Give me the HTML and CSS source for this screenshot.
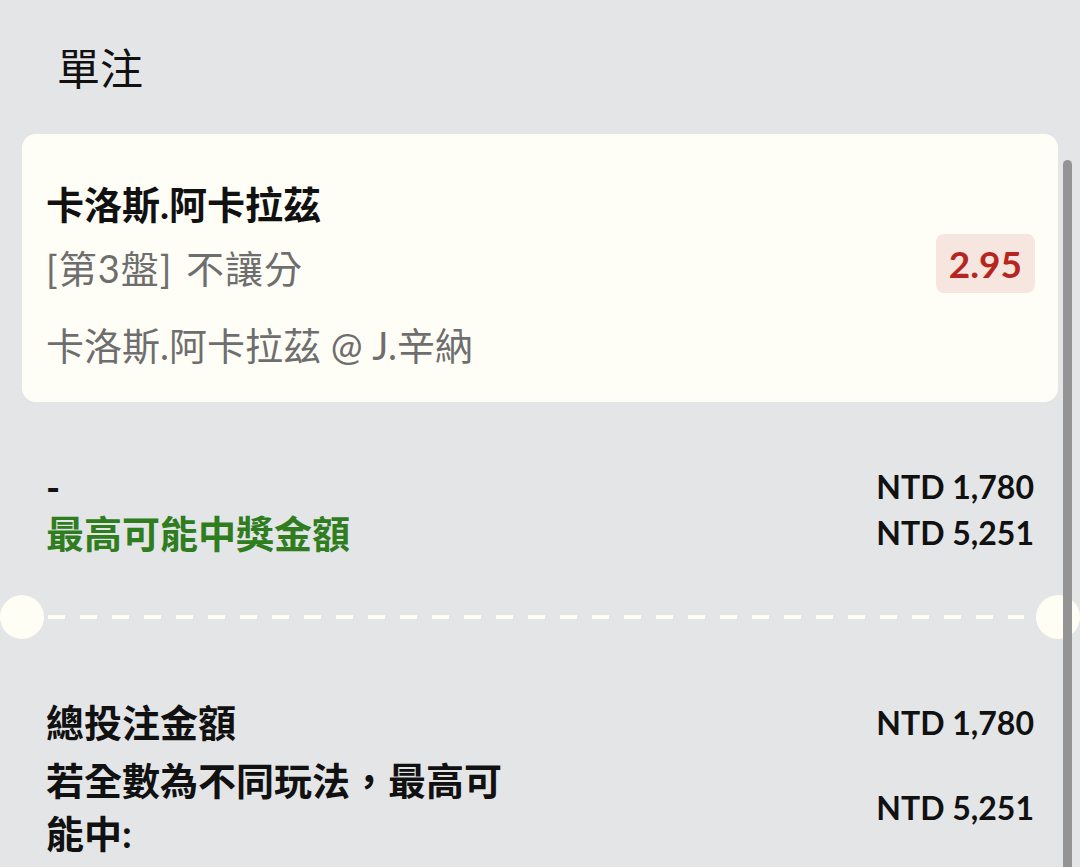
FILE: index.html
```html
<!DOCTYPE html>
<html lang="zh-Hant">
<head>
    <meta charset="UTF-8">
    <meta name="viewport" content="width=device-width, initial-scale=1.0">
    <title>單注</title>
    <link rel="stylesheet" href="styles.css">
</head>
<body>
    <div class="page">
        <h1 class="title">單注</h1>

        <div class="card">
            <div class="pick">
                <div class="pick-name">卡洛斯.阿卡拉茲</div>
                <div class="pick-market">[第3盤] 不讓分</div>
                <div class="pick-event">卡洛斯.阿卡拉茲 @ J.辛納</div>
            </div>
            <div class="odds">2.95</div>
        </div>

        <div class="summary">
            <div class="row">
                <div class="label">-</div>
                <div class="amount">NTD 1,780</div>
            </div>
            <div class="row">
                <div class="label win">最高可能中獎金額</div>
                <div class="amount">NTD 5,251</div>
            </div>
        </div>

        <div class="divider"></div>

        <div class="totals">
            <div class="row">
                <div class="label">總投注金額</div>
                <div class="amount">NTD 1,780</div>
            </div>
            <div class="row">
                <div class="label narrow">若全數為不同玩法，最高可能中:</div>
                <div class="amount">NTD 5,251</div>
            </div>
        </div>
    </div>
    <div class="scrollbar"></div>
</body>
</html>
```

FILE: styles.css
```css
body {
    margin: 0;
    background: #e4e5e7;
    font-family: Lato, "Noto Sans CJK TC", sans-serif;
    color: #111;
    overflow: hidden;
}
.page {
    padding: 36px 22px 0;
}
.title {
    margin: 0 0 38px 35px;
    font-family: "Noto Sans CJK TC", sans-serif;
    font-size: 43px;
    font-weight: 400;
    line-height: 60px;
}
.card {
    display: flex;
    align-items: center;
    justify-content: space-between;
    background: #fffef6;
    border-radius: 14px;
    padding: 42px 23px 29px 24px;
}
.pick div {
    font-size: 38px;
    line-height: 56px;
}
.pick-name {
    font-weight: 700;
}
.pick-market {
    margin-top: 8px;
    color: #6e6e6e;
    letter-spacing: 1px;
    word-spacing: 3px;
}
.pick-event {
    margin-top: 21px;
    color: #6e6e6e;
}
.odds {
    background: #f7e6e0;
    color: #b5261e;
    font-family: Lato, sans-serif;
    font-weight: 700;
    font-size: 37px;
    line-height: 59px;
    padding: 0 13px;
    border-radius: 8px;
    margin-top: -22px;
}
.summary {
    padding: 62px 24px 0;
}
.summary .row {
    line-height: 46px;
}
.row {
    display: flex;
    align-items: center;
    justify-content: space-between;
}
.label {
    font-size: 38px;
    font-weight: 700;
}
.win {
    color: #2f7d1f;
}
.amount {
    font-family: Lato, sans-serif;
    font-size: 32px;
    font-weight: 700;
    white-space: nowrap;
}
.divider {
    position: relative;
    height: 44px;
    margin: 39px 0 0;
    background: repeating-linear-gradient(to right, #fffef5 0 17px, transparent 17px 32px) no-repeat;
    background-size: calc(100% - 60px) 4px;
    background-position: 26px center;
}
.divider::before,
.divider::after {
    content: "";
    position: absolute;
    top: 0;
    width: 44px;
    height: 44px;
    border-radius: 50%;
    background: #fffef5;
}
.divider::before {
    left: -22px;
}
.divider::after {
    right: -22px;
}
.totals {
    padding: 57px 24px 0;
}
.totals .row {
    line-height: 53px;
    margin-bottom: 5px;
}
.narrow {
    width: 480px;
}
.scrollbar {
    position: fixed;
    top: 160px;
    right: 8px;
    width: 9px;
    bottom: 0;
    background: #949494;
    border-radius: 5px 5px 0 0;
}
```
